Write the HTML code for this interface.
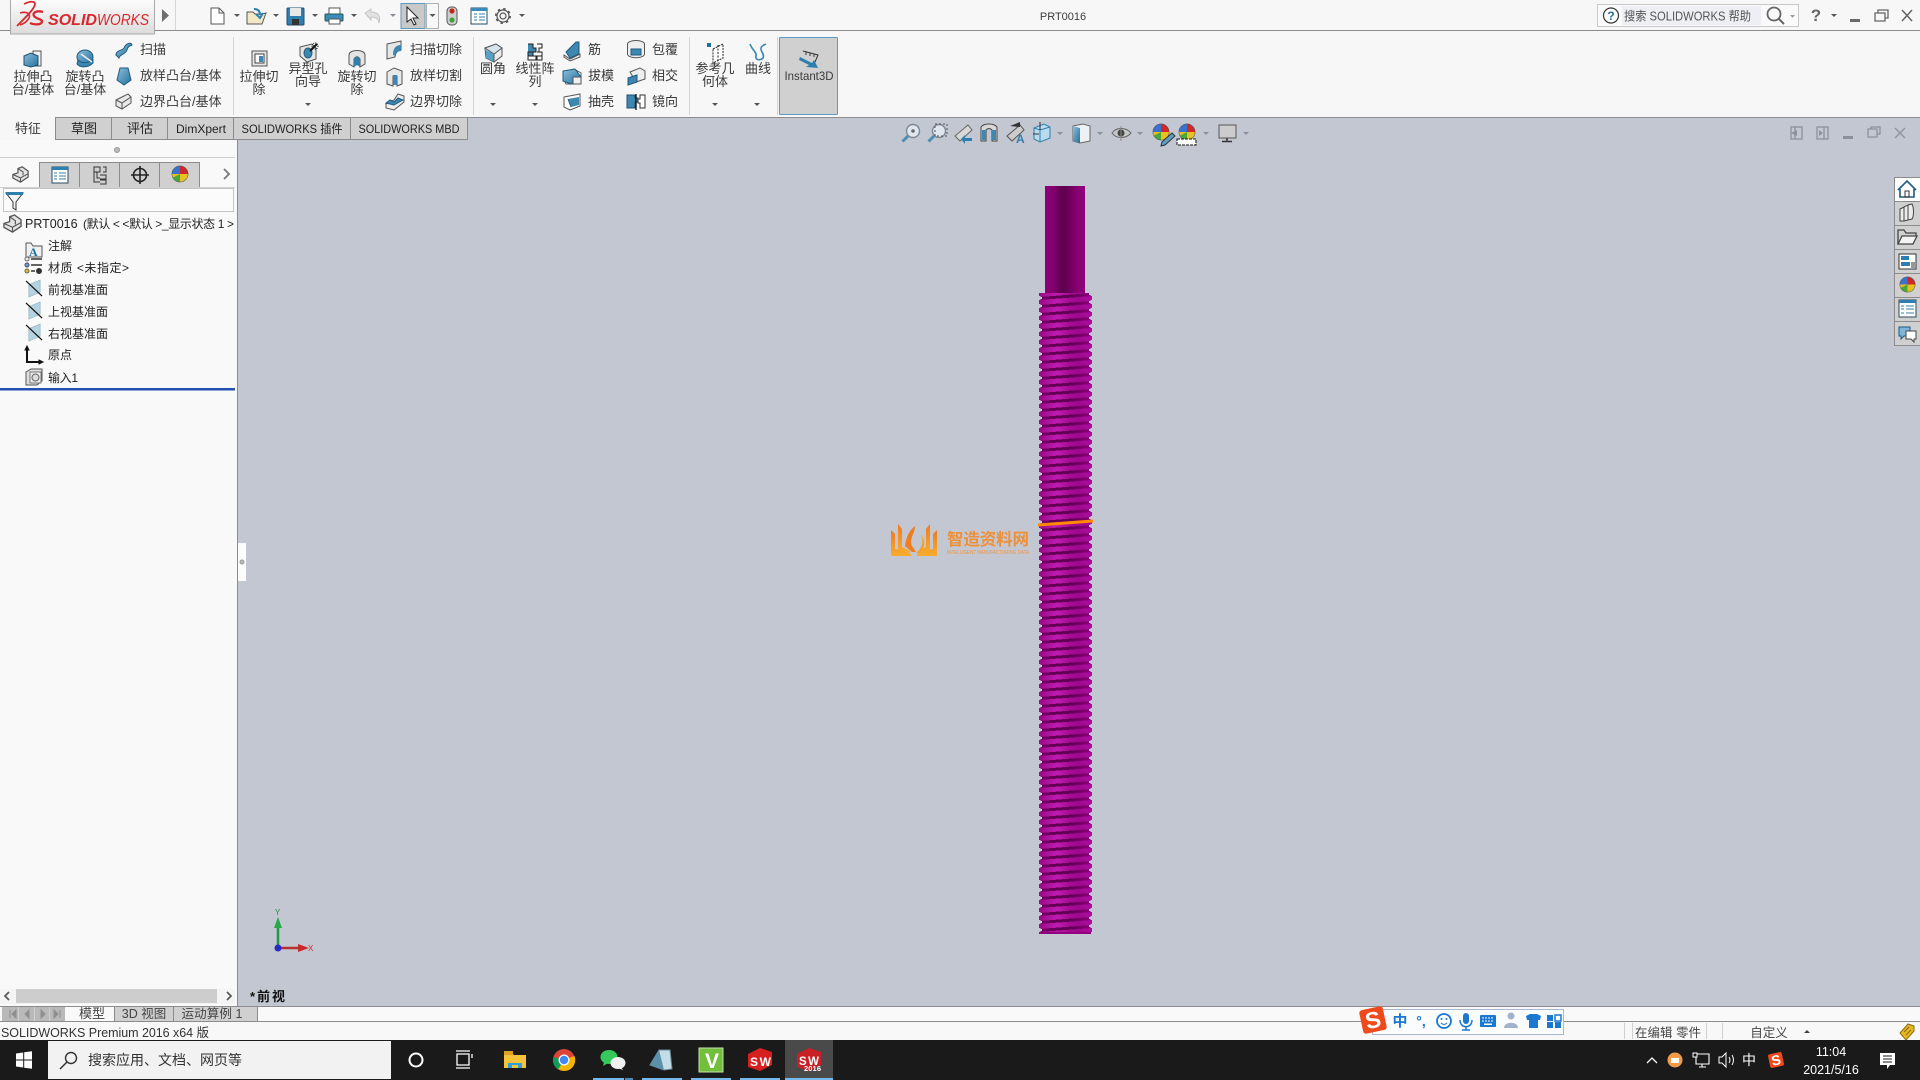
<!DOCTYPE html>
<html><head><meta charset="utf-8"><title>SOLIDWORKS</title>
<style>
html,body{margin:0;padding:0;width:1920px;height:1080px;overflow:hidden;background:#c3c7d2}
svg{display:block}
text{font-family:"Liberation Sans","Noto Sans CJK SC",sans-serif;fill:#3a3a3a;font-size:13px}
.c{text-anchor:middle}
.t12{font-size:12px;fill:#222}
.w{fill:#fff}
</style></head><body>
<svg width="1920" height="1080" viewBox="0 0 1920 1080" xmlns="http://www.w3.org/2000/svg">
<defs>
<linearGradient id="lit" gradientUnits="userSpaceOnUse" x1="0" x2="53" y1="0" y2="0"><stop offset="0" stop-color="#90107e"/><stop offset=".15" stop-color="#ac129c"/><stop offset=".35" stop-color="#c01cb0"/><stop offset=".55" stop-color="#aa0c98"/><stop offset=".75" stop-color="#9e088e"/><stop offset="1" stop-color="#ae0c9e"/></linearGradient>
<linearGradient id="drk" gradientUnits="userSpaceOnUse" x1="0" x2="53" y1="0" y2="0"><stop offset="0" stop-color="#820070"/><stop offset=".25" stop-color="#660058"/><stop offset=".6" stop-color="#600054"/><stop offset=".8" stop-color="#760066"/><stop offset="1" stop-color="#900080"/></linearGradient>
<linearGradient id="shank" x1="0" x2="1" y1="0" y2="0"><stop offset="0" stop-color="#8c0078"/><stop offset=".2" stop-color="#840070"/><stop offset=".38" stop-color="#640052"/><stop offset=".52" stop-color="#620050"/><stop offset=".7" stop-color="#7a0066"/><stop offset=".85" stop-color="#8c0078"/><stop offset="1" stop-color="#8c0078"/></linearGradient>
<pattern id="th" x="1039" y="292" width="53" height="8" patternUnits="userSpaceOnUse">
<g shape-rendering="crispEdges">
<polygon points="0,0 53,-4 53,1 0,5" fill="url(#lit)"/>
<polygon points="0,8 53,4 53,9 0,13" fill="url(#lit)"/>
<polygon points="0,5 53,1 53,4 0,8" fill="url(#drk)"/>
<rect x="0" y="4" width="1.500" height="4" fill="#c3c7d2"/><rect x="1.500" y="5" width="1.500" height="2" fill="#c3c7d2"/>
<rect x="51.500" y="0" width="1.500" height="4" fill="#c3c7d2"/><rect x="50" y="1" width="1.500" height="2" fill="#c3c7d2"/>
</g></pattern>
<linearGradient id="bl" x1="0" x2="1" y1="0" y2="1"><stop offset="0" stop-color="#8cc0dc"/><stop offset="1" stop-color="#256f9c"/></linearGradient>
<linearGradient id="logo" x1="0" x2="0" y1="0" y2="1"><stop offset="0" stop-color="#fdfdfd"/><stop offset="1" stop-color="#dcdcdc"/></linearGradient>
<linearGradient id="org" x1="0" x2="0" y1="0" y2="1"><stop offset="0" stop-color="#ee7a22"/><stop offset="1" stop-color="#f8ac2c"/></linearGradient>
<symbol id="part" viewBox="0 0 20 20" overflow="visible"><path d="M1 10 L7 8 V3 L12 1 L19 6 V13 L10 19 L1 14 Z" fill="#e4e4e4" stroke="#555" stroke-width="1.400"/><path d="M1 10 L10 14 L19 9 M10 14 V19 M7 3 L13 7 V11" fill="none" stroke="#555" stroke-width="1.200"/></symbol>
<symbol id="plane" viewBox="0 0 18 18" overflow="visible"><path d="M3 5 L15 0 V13 L3 18 Z" fill="#b4d2e0" stroke="#8fb2c4" stroke-width=".7"/><path d="M0 1 L17 17" stroke="#111" stroke-width="1.300"/></symbol>
<symbol id="ball" viewBox="0 0 20 20" overflow="visible"><circle cx="10" cy="10" r="9" fill="#e8c020"/><path d="M10 10 L1 10 A9 9 0 0 1 10 1 Z" fill="#3a72d0"/><path d="M10 10 V1 A9 9 0 0 1 19 10 Z" fill="#d02828"/><path d="M10 10 L2 14 A9 9 0 0 0 10 19 Z" fill="#48a838"/><circle cx="10" cy="10" r="9" fill="none" stroke="#555" stroke-width=".6"/></symbol>
<symbol id="drop" viewBox="0 0 6 4" overflow="visible"><path d="M0 0 H6 L3 3 Z" fill="#555"/></symbol>
<symbol id="dropg" viewBox="0 0 6 4" overflow="visible"><path d="M0 0 H6 L3 3 Z" fill="#8b8f99"/></symbol>
<symbol id="mag" viewBox="0 0 20 20" overflow="visible"><circle cx="12" cy="8" r="6.500" fill="#dfe6ee" stroke="#7d8894" stroke-width="1.400"/><path d="M7 13 L1.500 18.500" stroke="#4c8db4" stroke-width="3"/></symbol>
</defs>

<!-- canvas -->
<rect width="1920" height="1080" fill="#c3c7d2"/>

<!-- top bars -->
<rect x="0" y="0" width="1920" height="30" fill="#f7f7f7"/>
<rect x="0" y="30" width="1920" height="1" fill="#8c8c8c"/>
<rect x="0" y="31" width="1920" height="86" fill="#f7f7f7"/>
<rect x="0" y="117" width="1920" height="1" fill="#8c8c8c"/>
<rect x="0" y="118" width="238" height="888" fill="#f9f9f9"/>
<rect x="237" y="118" width="1" height="888" fill="#8c8c8c"/>

<!-- logo -->
<rect x="10.500" y="-1" width="144" height="35" fill="url(#logo)" stroke="#a8a8a8"/>
<g fill="none" stroke="#d8282e" stroke-width="2">
<path d="M24 4 C30 1 35 1 35 4 C35 8 27 16 17 26" stroke-width="1.800"/>
<path d="M20 13 C27 11 31 14 29 18 C27 22 23 24 20 25" stroke-width="1.600"/>
<path d="M43 12 C36 10 32 13 34 16 C36 19 43 19 42 22 C41 25 34 25 30 23" stroke-width="2.300"/>
</g>
<text x="48" y="25" style="font-size:15.500px;font-weight:bold;font-style:italic;fill:#d8282e" textLength="49" lengthAdjust="spacingAndGlyphs">SOLID</text>
<text x="97" y="25" style="font-size:15.500px;font-style:italic;fill:#d8282e" textLength="52" lengthAdjust="spacingAndGlyphs">WORKS</text>
<path d="M162 9 L169 15.500 L162 22 Z" fill="#6e6e6e"/>
<rect x="175" y="0" width="1" height="30" fill="#d6d6d6"/>

<!-- QAT -->
<path d="M211 8 H219 L224 13 V24 H211 Z" fill="#fff" stroke="#555"/><path d="M219 8 V13 H224" fill="none" stroke="#555"/>
<use href="#drop" x="234" y="14" width="6" height="4"/>
<path d="M247 24 V12 H253 L255 14 H262 L266 13 L262 24 Z" fill="#f3e8c6" stroke="#555"/><path d="M254 9 C258 9 260 11 260 15 M263 13 L260 18 L256 14" fill="none" stroke="#2f7fae" stroke-width="2"/>
<use href="#drop" x="273" y="14" width="6" height="4"/>
<rect x="287" y="8" width="17" height="17" rx="1" fill="#2f7fae" stroke="#1f4f70"/><rect x="290" y="8" width="11" height="8" fill="#e8e8e8"/><rect x="292" y="19" width="7" height="6" fill="#333"/>
<use href="#drop" x="312" y="14" width="6" height="4"/>
<rect x="329" y="8" width="11" height="6" fill="#fff" stroke="#555"/><rect x="325" y="14" width="18" height="7" rx="1" fill="#3a8dbb" stroke="#255"/><rect x="329" y="19" width="11" height="5" fill="#fff" stroke="#555"/>
<use href="#drop" x="351" y="14" width="6" height="4"/>
<path d="M365 13 L371 9 V12 C378 12 381 16 379 23 C378 18 375 17 371 17 V20 Z" fill="#e2e2e2" stroke="#c4c4c4"/>
<use href="#dropg" x="390" y="14" width="6" height="4"/>
<rect x="401" y="3.500" width="24" height="25" fill="#c9c9c9" stroke="#5b9ac0"/>
<path d="M407 7 V22 L411 19 L414 25 L416 24 L413 18 L418 18 Z" fill="#fff" stroke="#222"/>
<rect x="426.500" y="3.500" width="12" height="25" fill="#f7f7f7" stroke="#b0b0b0"/><use href="#drop" x="429.500" y="14" width="6" height="4"/>
<rect x="447" y="7" width="10" height="18" rx="4" fill="#cfcfcf" stroke="#555"/><circle cx="452" cy="11" r="2.600" fill="#c4271e"/><circle cx="452" cy="20" r="2.600" fill="#3aa43a"/>
<rect x="471" y="8" width="16" height="16" fill="#fff" stroke="#2a4a60"/><rect x="471" y="8" width="16" height="3" fill="#3a8dbb"/><path d="M474 14 H477 M479 14 H485 M474 17 H477 M479 17 H485 M474 20 H477 M479 20 H485" stroke="#2f7fae"/>
<circle cx="503" cy="16" r="3" fill="none" stroke="#555" stroke-width="1.200"/><circle cx="503" cy="16" r="6" fill="none" stroke="#555" stroke-width="1.200"/><circle cx="503" cy="16" r="7.200" fill="none" stroke="#555" stroke-width="1.600" stroke-dasharray="2.500 3.150"/>
<use href="#drop" x="519" y="14" width="6" height="4"/>
<text class="c" x="1063" y="20" style="font-size:11px">PRT0016</text>

<!-- help -->
<rect x="1597.500" y="4.500" width="201" height="22" fill="#fafafa" stroke="#c8c8c8"/>
<rect x="1622" y="6" width="139" height="19" fill="#edeff4"/>
<circle cx="1611" cy="15.500" r="7.500" fill="#fff" stroke="#333" stroke-width="1.200"/>
<text class="c" x="1611" y="20" style="font-size:12px;font-weight:bold;fill:#1f6f9c">?</text>
<text x="1624" y="20.500" style="font-size:12.500px;fill:#555" textLength="127" lengthAdjust="spacingAndGlyphs">搜索 SOLIDWORKS 帮助</text>
<circle cx="1774" cy="14" r="6.500" fill="none" stroke="#666" stroke-width="1.800"/><path d="M1779 19 L1784 24" stroke="#666" stroke-width="2"/>
<use href="#dropg" x="1790" y="15" width="5" height="3.500"/>
<text class="c" x="1816" y="21" style="font-size:17px;font-weight:bold;fill:#666">?</text>
<use href="#drop" x="1831" y="14" width="6" height="4"/>
<rect x="1850" y="19" width="10" height="3" fill="#6a6a6a"/>
<path d="M1875 13 H1885 V21 H1875 Z M1878 13 V10 H1888 V18 H1885" fill="none" stroke="#666" stroke-width="1.300"/>
<path d="M1902 10 L1912 21 M1912 10 L1902 21" stroke="#666" stroke-width="1.500"/>

<!-- Ribbon icons -->
<g>
<rect x="33" y="51" width="8" height="15" fill="#f0f0f0" stroke="#555"/><path d="M24 56 L31 53 L38 56 V65 L31 67 L24 65 Z" fill="url(#bl)" stroke="#1f4f70"/>
<ellipse cx="85" cy="57" rx="8" ry="7" fill="url(#bl)" stroke="#1f5a80"/><path d="M78 60 C82 64 88 63 93 60 V63 C88 68 80 68 77 64 Z" fill="#3d87b0" stroke="#1f5a80"/><path d="M81 54 L92 62" stroke="#eee" stroke-width="1.500"/>
<path d="M116 55 C116 50 122 51 124 48 C126 43 131 42 132 45 C130 46 128 46 127 50 C125 55 120 54 119 58 Z" fill="url(#bl)" stroke="#1f5a80"/>
<path d="M120 68 H128 L131 80 L124 85 L117 80 Z" fill="url(#bl)" stroke="#1f5a80"/>
<path d="M116 100 L124 96 L128 94 L131 97 V103 L122 109 L116 106 Z" fill="#e8e8e8" stroke="#555"/><path d="M116 100 L122 103 L131 97 M122 103 V109" fill="none" stroke="#555"/>
<path d="M252 51 H267 V66 H252 Z" fill="#e6e6e6" stroke="#555"/><rect x="255" y="54" width="9" height="9" fill="#fff" stroke="#444"/><rect x="259" y="56" width="4" height="6" fill="#3d87b0"/>
<path d="M300 47 L312 44 L316 48 V59 L307 62 L300 56 Z" fill="#e6e6e6" stroke="#555"/><ellipse cx="308" cy="53" rx="4" ry="5" fill="#3d87b0" stroke="#1f5a80"/><path d="M310 51 L317 44" stroke="#111" stroke-width="2"/><circle cx="315" cy="46" r="3" fill="none" stroke="#111" stroke-dasharray="1 1"/>
<path d="M349 55 C349 49 365 49 365 55 V64 L360 67 V59 C358 56 356 56 354 59 V67 L349 64 Z" fill="#e4e4e4" stroke="#555"/><path d="M354 59 V67 L357 65 L360 67 V59 C358 56 356 56 354 59" fill="#2f7fae"/>
<path d="M387 44 L401 41 V50 C397 50 395 53 395 57 L387 59 Z" fill="#e6e6e6" stroke="#555"/><path d="M393 55 C393 48 396 45 401 45 V51 C398 51 396 53 396 56 Z" fill="#3d87b0"/>
<path d="M387 72 L394 68 L402 71 V84 L397 86 V76 H393 V86 L387 84 Z" fill="#e8e8e8" stroke="#555"/><rect x="393" y="75" width="4" height="10" fill="#3d87b0"/>
<path d="M386 104 L394 100 L398 94 L404 96 V102 L394 110 L386 108 Z" fill="#eee" stroke="#555"/><path d="M386 103 L390 100 L394 102 L398 98 L403 100 L394 105 Z" fill="#3d87b0" stroke="#1f5a80"/>
<path d="M485 48 L496 44 L502 48 V56 L494 62 L486 58 Z" fill="#ececec" stroke="#555"/><path d="M485 48 L496 44 L502 48 L494 54 Z" fill="#d8e4ec" stroke="#555"/><path d="M486 50 L494 54 V62 L486 58 Z" fill="#5a9fc5"/><path d="M494 54 V62" stroke="#555"/>
<g fill="none" stroke="#222" stroke-width="1"><path d="M528 44 H533 V48 H536 V52 H533 V56 H528" fill="#3d87b0"/><path d="M537 44 H542 V48 H539 V52 H542 V56 H537"/><path d="M528 52 H533 V56 H536 V60 H528 Z"/><path d="M537 52 H542 V60 H537 V56 H539"/></g>
<path d="M566 52 L576 42 H579 V54 L570 58 Z" fill="#3d87b0" stroke="#1f5a80"/><path d="M564 55 L570 59 L580 54 V57 L570 61 L564 57 Z" fill="#eee" stroke="#555"/>
<path d="M564 72 L574 69 L581 73 V84 L572 84 H566 L564 80 Z" fill="#fff" stroke="#555"/><path d="M563 71 L575 69 L581 77 L571 84 L563 81 Z" fill="url(#bl)" stroke="#1f5a80"/><rect x="573" y="77" width="8" height="7" fill="#f0f0f0" stroke="#555"/>
<path d="M564 97 L580 94 V106 L570 110 L564 107 Z" fill="#fff" stroke="#555"/><path d="M568 99 L579 97 V105 L571 107 Z" fill="#3d87b0"/><path d="M568 99 L571 107" stroke="#1f5a80"/>
<ellipse cx="636" cy="44" rx="8.500" ry="3.500" fill="#eee" stroke="#555"/><path d="M627.500 44 V54 C628 59 644 59 644.500 54 V44" fill="#eee" stroke="#555"/><path d="M631 49 H641 V55 H631 Z" fill="#3d87b0" stroke="#1f5a80"/>
<path d="M630 72 L640 68 L645 71 V79 L636 82 Z" fill="#eee" stroke="#555"/><path d="M628 78 L637 75 V82 L628 85 Z" fill="#3d87b0" stroke="#1f5a80"/>
<path d="M627 95 H635 V98 H638 V102 H635 V108 H627 Z" fill="#3d87b0" stroke="#1f4f70"/><path d="M636 94 V110" stroke="#111" stroke-width="1.300"/><path d="M645 95 H640 V99 H638 V103 H640 V108 H645 Z" fill="#fff" stroke="#333"/>
<rect x="707" y="43" width="4" height="4" fill="#1f6f9c"/><path d="M713 49 L723 44 V58 L713 63 Z" fill="#fff" stroke="#222" stroke-dasharray="2 1"/><path d="M718 45 V63" stroke="#222" stroke-dasharray="2 1.500"/>
<path d="M750 44 C752 50 757 52 756 56 C755 60 760 61 763 58 C765 54 760 51 761 48 C762 45 764 45 766 44" fill="none" stroke="#3d87b0" stroke-width="1.600"/>
</g>
<!-- Ribbon text -->
<g style="font-size:13px">
<text class="c" x="33" y="81">拉伸凸</text><text class="c" x="33" y="94">台/基体</text>
<text class="c" x="85" y="81">旋转凸</text><text class="c" x="85" y="94">台/基体</text>
<text x="140" y="54">扫描</text><text x="140" y="80">放样凸台/基体</text><text x="140" y="106">边界凸台/基体</text>
<text class="c" x="259" y="81">拉伸切</text><text class="c" x="259" y="94">除</text>
<text class="c" x="308" y="73">异型孔</text><text class="c" x="308" y="86">向导</text>
<text class="c" x="357" y="81">旋转切</text><text class="c" x="357" y="94">除</text>
<text x="410" y="54">扫描切除</text><text x="410" y="80">放样切割</text><text x="410" y="106">边界切除</text>
<text class="c" x="493" y="73">圆角</text>
<text class="c" x="535" y="73">线性阵</text><text class="c" x="535" y="86">列</text>
<text x="588" y="54">筋</text><text x="588" y="80">拔模</text><text x="588" y="106">抽壳</text>
<text x="652" y="54">包覆</text><text x="652" y="80">相交</text><text x="652" y="106">镜向</text>
<text class="c" x="715" y="73">参考几</text><text class="c" x="715" y="86">何体</text>
<text class="c" x="758" y="73">曲线</text>
</g>
<use href="#drop" x="305" y="103" width="6" height="4"/><use href="#drop" x="490" y="103" width="6" height="4"/><use href="#drop" x="532" y="103" width="6" height="4"/><use href="#drop" x="712" y="103" width="6" height="4"/><use href="#drop" x="754" y="103" width="6" height="4"/>
<rect x="233" y="37" width="1" height="78" fill="#d4d4d4"/><rect x="473" y="37" width="1" height="78" fill="#d4d4d4"/><rect x="689" y="37" width="1" height="78" fill="#d4d4d4"/><rect x="777" y="37" width="1" height="78" fill="#d4d4d4"/>
<rect x="779.500" y="37.500" width="58" height="77" rx="1" fill="#d0d0d0" stroke="#5b9ac0"/>
<path d="M803 51 L818 55 L815 62 M806 52 V55 M810 53 V56 M814 54 V57" fill="none" stroke="#333"/><path d="M800 57 L812 63 L814 60 L818 68 L806 67 L809 65 L799 60 Z" fill="#2f7fae"/>
<text class="c" x="809" y="80" style="font-size:12px" textLength="49" lengthAdjust="spacingAndGlyphs">Instant3D</text>

<!-- tabs -->
<g fill="#d0d0d0" stroke="#8c8c8c"><rect x="55.500" y="117.500" width="56" height="22"/><rect x="111.500" y="117.500" width="56" height="22"/><rect x="167.500" y="117.500" width="66" height="22"/><rect x="233.500" y="117.500" width="117" height="22"/><rect x="350.500" y="117.500" width="117" height="22"/></g>
<rect x="0" y="139" width="238" height="1" fill="#8c8c8c"/>
<rect x="0" y="117" width="55" height="23" fill="#f7f7f7"/>
<text class="c" x="28" y="133">特征</text><text class="c" x="84" y="133" style="fill:#222">草图</text><text class="c" x="140" y="133" style="fill:#222">评估</text>
<text class="c" x="201" y="133" style="font-size:12px;fill:#222" textLength="50" lengthAdjust="spacingAndGlyphs">DimXpert</text>
<text class="c" x="292" y="133" style="font-size:12px;fill:#222" textLength="101" lengthAdjust="spacingAndGlyphs">SOLIDWORKS 插件</text>
<text class="c" x="409" y="133" style="font-size:12px;fill:#222" textLength="101" lengthAdjust="spacingAndGlyphs">SOLIDWORKS MBD</text>

<!-- left panel -->
<rect x="0" y="140" width="237" height="17" fill="#f9f9f9"/>
<circle cx="117" cy="150" r="2.500" fill="#b8b8b8" stroke="#999"/>
<rect x="0" y="157" width="235" height="1" fill="#cfcfcf"/>
<g fill="#d0d0d0" stroke="#8c8c8c"><rect x="39.500" y="162.500" width="40" height="25"/><rect x="79.500" y="162.500" width="40" height="25"/><rect x="119.500" y="162.500" width="40" height="25"/><rect x="159.500" y="162.500" width="40" height="25"/></g>
<rect x="0" y="162" width="39" height="26" fill="#f9f9f9"/>
<rect x="0" y="187" width="235" height="1" fill="#cfcfcf"/>
<use href="#part" x="12" y="166" width="17" height="17"/>
<rect x="52" y="167" width="16" height="16" fill="#fff" stroke="#2a4a60"/><rect x="52" y="167" width="16" height="3" fill="#2f7fae"/><path d="M54 173 H57 M59 173 H66 M54 176 H57 M59 176 H66 M54 179 H57 M59 179 H66" stroke="#2f7fae"/>
<path d="M94 167 H100 V172 H94 Z M94 172 V182 H100 M97 172 V178 H100 M100 175 H106 V179 H100 M100 180 H106 V184 H100 M103 167 H106 V172 H103" fill="none" stroke="#333"/>
<circle cx="140" cy="175" r="6.500" fill="none" stroke="#222" stroke-width="1.600"/><path d="M140 166 V184 M131 175 H149" stroke="#222" stroke-width="1.600"/>
<use href="#ball" x="171" y="165" width="18" height="18"/>
<path d="M224 169 L229 174 L224 179" fill="none" stroke="#777" stroke-width="1.800"/>
<rect x="3.500" y="188.500" width="230" height="23" fill="#fbfbfb" stroke="#c4c4c4"/>
<path d="M6 193 H23 L16 202 V210 L13 208 V202 Z" fill="#f4f4f4" stroke="#333"/><rect x="6" y="192" width="17" height="3" fill="#2f7fae"/>
<use href="#part" x="3" y="214" width="19" height="19"/>
<text x="25" y="228" style="font-size:12.500px;fill:#222">PRT0016</text>
<text x="83" y="228" class="t12" textLength="151">(默认 &lt; &lt;默认 &gt;_显示状态 1 &gt;</text>
<path d="M26 243 V257 H42 V246 H33 L31 243 Z" fill="#eef0f2" stroke="#555"/><text x="29" y="256" style="font-family:'Liberation Serif',serif;font-weight:bold;font-size:12px;fill:#1f6f9c">A</text>
<text x="48" y="250" class="t12">注解</text>
<circle cx="27" cy="259" r="2" fill="#eee" stroke="#666"/><circle cx="27" cy="265" r="2" fill="#6aa6cc" stroke="#446"/><circle cx="27" cy="271" r="2" fill="#e4b828" stroke="#665"/><path d="M31 259 H42 M31 265 H42 M31 271 H35" stroke="#333" stroke-width="1.400"/><circle cx="39" cy="271" r="3" fill="#333"/>
<text x="48" y="272" class="t12" textLength="81">材质  &lt;未指定&gt;</text>
<use href="#plane" x="26" y="280" width="17" height="17"/><text x="48" y="294" class="t12">前视基准面</text>
<use href="#plane" x="26" y="302" width="17" height="17"/><text x="48" y="316" class="t12">上视基准面</text>
<use href="#plane" x="26" y="324" width="17" height="17"/><text x="48" y="338" class="t12">右视基准面</text>
<path d="M27 347 V362 H41" fill="none" stroke="#111" stroke-width="2"/><path d="M27 346 L25 350 H29 Z M43 362 L39 360 V364 Z" fill="#111" stroke="#111"/>
<text x="48" y="359" class="t12">原点</text>
<path d="M26 372 L31 369 H42 V381 L37 385 H26 Z" fill="#dfdfdf" stroke="#555"/><rect x="30" y="372" width="11" height="11" fill="#eee" stroke="#777"/><circle cx="35.500" cy="377.500" r="3.500" fill="#ddd" stroke="#666"/>
<text x="48" y="382" class="t12" textLength="30">输入1</text>
<rect x="0" y="388" width="235" height="2.500" fill="#2450b0"/>

<!-- left scrollbar -->
<rect x="0" y="989" width="235" height="15" fill="#f4f4f4"/>
<rect x="16" y="989" width="201" height="14" fill="#cdcdcd"/>
<path d="M9 992 L5 996 L9 1000 M227 992 L231 996 L227 1000" fill="none" stroke="#555" stroke-width="1.700"/>

<!-- collapse tab -->
<rect x="238" y="543" width="8" height="38" fill="#fcfcfc"/><circle cx="242" cy="562" r="2" fill="#bbb" stroke="#999"/>

<!-- heads-up -->
<g>
<use href="#mag" x="901" y="123" width="20" height="20"/><circle cx="913" cy="131" r="1.800" fill="#666"/>
<use href="#mag" x="927" y="123" width="20" height="20"/><rect x="935" y="124" width="12" height="12" fill="none" stroke="#555" stroke-dasharray="2 2"/>
<path d="M955 136 L968 125 L972 130 L960 141 Z" fill="#d8d8d8" stroke="#666"/><path d="M961 139 L965 135 V138 H972 V141 H965 V144 Z" fill="#2f7fae"/>
<path d="M981 127 C984 123 994 123 997 127 V141 H992 V130 C990 128 988 128 986 130 V141 H981 Z" fill="#d8d8d8" stroke="#444"/><rect x="982" y="130" width="4" height="10" fill="#3d87b0"/><rect x="992" y="130" width="4" height="10" fill="#3d87b0"/>
<path d="M1007 136 L1020 125 L1024 130 L1012 141 Z" fill="#ccc" stroke="#555"/><path d="M1010 126 L1020 122 V127 Z" fill="#333"/><text x="1016" y="143" style="font-size:12px;fill:#2f7fae;font-weight:bold">A</text>
<path d="M1034 128 L1044 124 L1050 127 V138 L1040 142 L1034 139 Z" fill="#b9dcee" stroke="#2f7fae"/><path d="M1040 130 V142 M1034 128 L1040 130 L1050 127" stroke="#2f7fae" fill="none"/><path d="M1040 122 V130 M1033 134 H1039" stroke="#333"/>
<use href="#dropg" x="1057" y="132" width="6" height="4"/>
<path d="M1073 126 L1083 124 L1090 126 V141 L1080 143 L1073 141 Z" fill="#eef1f4" stroke="#666"/><path d="M1073 126 L1080 128 V143 L1073 141 Z" fill="url(#bl)"/>
<use href="#dropg" x="1097" y="132" width="6" height="4"/>
<path d="M1112 133 C1116 127 1126 127 1131 133 C1126 139 1116 139 1112 133 Z" fill="#c6c6c6" stroke="#666"/><circle cx="1121" cy="133" r="3.500" fill="#444"/><path d="M1121 126 V141" stroke="#888"/>
<use href="#dropg" x="1137" y="132" width="6" height="4"/>
<use href="#ball" x="1152" y="123" width="18" height="18"/><path d="M1162 142 L1172 133 L1175 136 L1165 145 L1161 146 Z" fill="#5a9fc5" stroke="#333"/>
<use href="#ball" x="1178" y="123" width="18" height="18"/><rect x="1177" y="139" width="19" height="6" fill="#fff" stroke="#111" stroke-dasharray="3 1"/>
<use href="#dropg" x="1203" y="132" width="6" height="4"/>
<rect x="1219" y="125" width="17" height="13" fill="#ccc" stroke="#555"/><path d="M1227 138 V141 M1222 141.500 H1232" stroke="#333" stroke-width="1.500"/>
<use href="#dropg" x="1243" y="132" width="6" height="4"/>
</g>

<!-- window ctrl in canvas -->
<g fill="none" stroke="#8e9199" stroke-width="1.300">
<rect x="1791" y="127" width="11" height="12"/><path d="M1795 127 V139"/><path d="M1800 130 L1794 133 L1800 136" fill="#8e9199" stroke="none" transform="translate(-3 0)"/>
<rect x="1817" y="127" width="11" height="12"/><path d="M1824 127 V139"/><path d="M1819 130 L1823 133 L1819 136 Z" fill="#8e9199" stroke="none"/>
<path d="M1868 129 H1877 V137 H1868 Z M1871 129 V127 H1880 V134 H1877"/>
<path d="M1895 128 L1905 138 M1905 128 L1895 138"/>
</g>
<rect x="1843" y="136" width="10" height="3" fill="#8e9199"/>

<!-- task pane -->
<g fill="#d0d0d0" stroke="#8c8c8c"><rect x="1894.500" y="177.500" width="26" height="24" fill="#fff"/><rect x="1894.500" y="201.500" width="26" height="24"/><rect x="1894.500" y="225.500" width="26" height="24"/><rect x="1894.500" y="249.500" width="26" height="24"/><rect x="1894.500" y="273.500" width="26" height="24"/><rect x="1894.500" y="297.500" width="26" height="24"/><rect x="1894.500" y="321.500" width="26" height="24"/></g>
<path d="M1898 190 L1907 181 L1916 190 M1900 189 V197 H1914 V189" fill="#fff" stroke="#1f5a80" stroke-width="1.600"/><rect x="1905" y="191" width="4" height="6" fill="none" stroke="#333"/>
<path d="M1900 209 L1904 207 V221 H1900 Z M1904 207 L1908 205 V220 L1904 221 Z M1908 205 L1912 204 C1914 208 1914 216 1912 219 L1908 220 Z" fill="#ececec" stroke="#444"/>
<path d="M1898 244 V230 H1904 L1906 233 H1916 V236" fill="none" stroke="#444" stroke-width="1.300"/><path d="M1898 244 L1902 236 H1917 L1913 244 Z" fill="#f4f4f4" stroke="#444" stroke-width="1.300"/>
<rect x="1899" y="254" width="17" height="15" fill="#fff" stroke="#333"/><rect x="1901" y="256" width="8" height="4" fill="#2f7fae"/><rect x="1901" y="262" width="9" height="4" fill="#2f7fae"/><rect x="1911" y="262" width="4" height="6" fill="#999"/>
<use href="#ball" x="1899" y="276" width="17" height="17"/>
<rect x="1899" y="300" width="17" height="17" fill="#fff" stroke="#2a4a60"/><rect x="1899" y="300" width="17" height="3" fill="#2f7fae"/><path d="M1901 306 H1904 M1906 306 H1914 M1901 309 H1904 M1906 309 H1914 M1901 313 H1904 M1906 313 H1914" stroke="#2f7fae"/>
<path d="M1899 327 H1910 V336 H1904 L1901 339 V336 H1899 Z" fill="#7db6d8" stroke="#1f5a80"/><path d="M1906 331 H1916 V339 H1914 V342 L1911 339 H1906 Z" fill="#fff" stroke="#444"/>

<!-- model -->
<rect x="1045" y="186" width="40" height="108" fill="url(#shank)"/>
<rect x="1039" y="293" width="53" height="641" fill="url(#th)"/>
<rect x="1041" y="932" width="50" height="2" fill="#90007e"/>
<path d="M1038 525 L1093 521" stroke="#ff8a00" stroke-width="3"/>

<!-- watermark -->
<g>
<path d="M891 556 V530 L895 534 V549 C900 550 905 551 911 554 V556 Z" fill="url(#org)"/>
<path d="M937 556 V530 L933 534 V549 C928 550 923 551 917 554 V556 Z" fill="url(#org)"/>
<path d="M898 550 V524 L902 529 V547 L910 551 V553 Z" fill="url(#org)"/>
<path d="M930 550 V524 L926 529 V547 L918 551 V553 Z" fill="url(#org)"/>
<path d="M905 546 C906 536 910 530 915 526 C915 534 909 538 912 546 L916 552 H912 Z" fill="#ee7e20"/>
<path d="M916 553 C922 548 924 542 921 535 C926 540 925 548 920 553 Z" fill="#f4a02a"/>
</g>
<text x="947" y="545" style="font-size:16.500px;font-weight:bold;fill:#ef8f36" textLength="82">智造资料网</text>
<text x="947" y="554" style="font-size:5px;fill:#ee9440" textLength="82" lengthAdjust="spacingAndGlyphs">INTELLIGENT MANUFACTURING DATA</text>

<!-- triad -->
<path d="M278 949 V926" stroke="#1f9a3e" stroke-width="2.500"/><path d="M278 917 L274 928 H282 Z" fill="#28a848"/>
<path d="M279 948 H300" stroke="#b83030" stroke-width="2.500"/><path d="M309 948 L298 944 V952 Z" fill="#c82a2a"/>
<circle cx="278" cy="948" r="3.500" fill="#2a2ac8"/>
<text x="275" y="915" style="font-size:8px;fill:#2e8a4e">Y</text><text x="308" y="951" style="font-size:8px;fill:#b83030">X</text>

<text x="250" y="1001" style="font-size:13px;font-weight:bold;fill:#111;letter-spacing:2px">*前视</text>

<!-- bottom tabs -->
<rect x="0" y="1006" width="1920" height="1" fill="#8c8c8c"/>
<rect x="0" y="1007" width="1920" height="14" fill="#f9f9f9"/>
<rect x="0" y="1021" width="1920" height="1" fill="#8c8c8c"/>
<rect x="0" y="1022" width="1920" height="18" fill="#f8f8f8"/>
<rect x="2" y="1007" width="63" height="14" fill="#b9b9b9"/>
<path d="M10 1010 V1018 M16 1010 L12 1014 L16 1018 Z M29 1010 L25 1014 L29 1018 Z M41 1010 L45 1014 L41 1018 Z M54 1010 L58 1014 L54 1018 Z M60 1010 V1018" fill="#8f8f8f" stroke="#8f8f8f"/>
<path d="M18.500 1007 V1021 M34.500 1007 V1021 M49.500 1007 V1021" stroke="#d0d0d0"/>
<g fill="#d0d0d0" stroke="#8c8c8c"><rect x="114.500" y="1006.500" width="59" height="15"/><rect x="173.500" y="1006.500" width="84" height="15"/></g>
<text class="c" x="92" y="1018" style="font-size:13px;fill:#444">模型</text>
<text class="c" x="144" y="1018" style="font-size:12.500px;fill:#444">3D 视图</text>
<text class="c" x="212" y="1018" style="font-size:12.500px;fill:#444" textLength="61">运动算例 1</text>
<text x="1" y="1037" style="font-size:12.500px;fill:#333" textLength="208">SOLIDWORKS Premium 2016 x64 版</text>

<!-- status right -->
<path d="M1624.500 1023 V1039 M1632.500 1023 V1039 M1706.500 1023 V1039 M1722.500 1023 V1039" stroke="#d0d0d0"/>
<text class="c" x="1668" y="1037" style="font-size:12.500px;fill:#444">在编辑 零件</text>
<text class="c" x="1769" y="1037" style="font-size:12.500px;fill:#444">自定义</text>
<path d="M1804 1033 H1810 L1807 1030 Z" fill="#444"/>
<path d="M1900 1033 L1908 1024 L1914 1026 V1031 L1906 1040 Z" fill="#e6b820" stroke="#8a6a10"/><path d="M1904 1032 L1909 1027 M1906 1035 L1911 1030" stroke="#8a6a10"/>

<!-- IME -->
<rect x="1372.500" y="1009.500" width="191" height="25" fill="#fbfcfe" stroke="#a8b8d0"/>
<g transform="rotate(-12 1373 1020)"><rect x="1361" y="1008" width="24" height="24" rx="3" fill="#ee4a1c"/><text class="c" x="1373" y="1028" style="font-size:23px;font-weight:bold;fill:#fff">S</text></g>
<text class="c" x="1400" y="1026" style="font-size:15px;font-weight:bold;fill:#1a78d0">中</text>
<text class="c" x="1421" y="1026" style="font-size:14px;font-weight:bold;fill:#1a78d0">°,</text>
<circle cx="1444" cy="1021" r="7" fill="none" stroke="#1a78d0" stroke-width="1.800"/><circle cx="1441.500" cy="1019" r="1" fill="#1a78d0"/><circle cx="1446.500" cy="1019" r="1" fill="#1a78d0"/><path d="M1441 1023 Q1444 1026 1447 1023" fill="none" stroke="#1a78d0"/>
<rect x="1463" y="1013" width="6" height="11" rx="3" fill="#1a78d0"/><path d="M1460 1020 C1460 1029 1472 1029 1472 1020 M1466 1027 V1030 M1462 1030 H1470" fill="none" stroke="#1a78d0" stroke-width="1.500"/>
<rect x="1480" y="1015" width="16" height="12" rx="1" fill="#1a78d0"/><path d="M1482 1018 H1494 M1482 1021 H1494" stroke="#fff" stroke-dasharray="2 1"/><rect x="1484" y="1023.500" width="8" height="1.500" fill="#fff"/>
<circle cx="1511" cy="1016" r="3.500" fill="#9fb4cc"/><path d="M1504 1028 C1504 1021 1518 1021 1518 1028 Z" fill="#9fb4cc"/>
<path d="M1526 1016 L1530 1014 H1537 L1541 1016 L1540 1020 H1538 V1028 H1529 V1020 H1527 Z" fill="#1a78d0"/>
<rect x="1547" y="1015" width="6" height="6" fill="#1a78d0"/><rect x="1555" y="1015" width="6" height="6" fill="none" stroke="#1a78d0" stroke-width="1.500"/><rect x="1547" y="1022" width="6" height="6" fill="#1a78d0"/><rect x="1555" y="1022" width="6" height="6" fill="#1a78d0"/>

<!-- taskbar -->
<rect x="0" y="1040" width="1920" height="40" fill="#1a1a1a"/>
<rect x="48" y="1041" width="343" height="38" fill="#f2f2f2"/>
<g fill="#fff"><path d="M16 1053.500 L23.200 1052.500 V1059.500 H16 Z M24.200 1052.300 L32 1051.300 V1059.500 H24.200 Z M16 1060.500 H23.200 V1067.500 L16 1066.500 Z M24.200 1060.500 H32 V1068.700 L24.200 1067.700 Z"/></g>
<circle cx="71" cy="1058" r="5.500" fill="none" stroke="#333" stroke-width="1.400"/><path d="M67 1062 L60 1069" stroke="#333" stroke-width="1.500"/>
<text x="88" y="1065" style="font-size:14px;fill:#333">搜索应用、文档、网页等</text>
<circle cx="416" cy="1060" r="6.500" fill="none" stroke="#fff" stroke-width="2"/>
<path d="M457 1054 H469 V1065 H457 Z M456 1051 H470 M456 1068 H470 M472 1054 V1058" fill="none" stroke="#fff" stroke-width="1.300"/>
<path d="M504 1053 V1068 H526 V1055 H514 L512 1053 Z" fill="#f5c33b"/><rect x="504" y="1051" width="9" height="4" fill="#e0a020"/><path d="M508 1068 V1063 H522 V1068 H518 V1065 H512 V1068 Z" fill="#2e9fd8"/>
<circle cx="564" cy="1060" r="11" fill="#db4437"/><path d="M564 1060 L574.500 1056 A11 11 0 0 1 558 1069 Z" fill="#f4b400"/><path d="M564 1060 L558 1069.500 A11 11 0 0 1 553.500 1057 Z" fill="#0f9d58"/><circle cx="564" cy="1060" r="5.500" fill="#fff"/><circle cx="564" cy="1060" r="4.200" fill="#4285f4"/>
<ellipse cx="609" cy="1057" rx="8.500" ry="7" fill="#35c85a"/><path d="M604 1062 L603 1066 L608 1063 Z" fill="#35c85a"/><ellipse cx="618" cy="1063" rx="7.500" ry="6" fill="#f0f0f0"/><path d="M621 1067 L623 1070 L618 1068 Z" fill="#f0f0f0"/>
<path d="M650 1065 L659 1050 H670 L672 1069 L664 1070 Z" fill="#c4dce6" stroke="#6a8a9a"/><path d="M650 1065 L659 1050 L664 1070 Z" fill="#5a90aa"/>
<rect x="699" y="1048" width="24" height="24" fill="#72bf3c" stroke="#c8e0b0"/><text class="c" x="712" y="1068" style="font-size:21px;font-weight:bold;fill:#fff">V</text>
<path d="M748 1054 L760 1048 L772 1052 V1065 L760 1071 L748 1067 Z" fill="#d62020"/><text x="750" y="1066" style="font-size:12px;font-weight:bold;fill:#fff" textLength="21">SW</text>
<rect x="785" y="1040" width="48" height="40" fill="#4a4a4a"/>
<path d="M797 1054 L809 1048 L821 1052 V1065 L809 1071 L797 1067 Z" fill="#c82024"/><text x="799" y="1065" style="font-size:11.500px;font-weight:bold;fill:#fff" textLength="20">SW</text><text x="804" y="1071" style="font-size:7.500px;font-weight:bold;fill:#fff" textLength="17">2016</text>
<g fill="#76b9ed"><rect x="593" y="1078" width="31" height="2"/><rect x="625" y="1078" width="8" height="2" fill="#4f88b4"/><rect x="642" y="1078" width="40" height="2"/><rect x="691" y="1078" width="40" height="2"/><rect x="740" y="1078" width="40" height="2"/><rect x="785" y="1078" width="48" height="2"/></g>

<!-- tray -->
<path d="M1647 1063 L1652 1058 L1657 1063" fill="none" stroke="#fff" stroke-width="1.300"/>
<circle cx="1675" cy="1060" r="7.500" fill="#f09a4a"/><rect x="1671" y="1058" width="8" height="5" fill="#fff"/>
<path d="M1696 1054 H1709 V1064 H1696 Z M1699 1067 H1706 M1702 1064 V1067" fill="none" stroke="#fff" stroke-width="1.100"/><rect x="1693" y="1053" width="4" height="4" fill="#1a1a1a" stroke="#fff"/>
<path d="M1719 1057 H1722 L1726 1053 V1067 L1722 1063 H1719 Z" fill="none" stroke="#fff"/><path d="M1729 1057 Q1731 1060 1729 1063 M1732 1055 Q1735 1060 1732 1065" fill="none" stroke="#fff"/>
<text class="c w" x="1749" y="1065" style="font-size:14px;fill:#fff">中</text>
<g transform="rotate(-12 1776 1060)"><rect x="1769" y="1053" width="14" height="14" rx="2" fill="#ee4a1c"/><text class="c" x="1776" y="1065" style="font-size:14px;font-weight:bold;fill:#fff">S</text></g>
<text class="c" x="1831" y="1056" style="font-size:12.500px;fill:#fff">11:04</text>
<text class="c" x="1831" y="1074" style="font-size:12.500px;fill:#fff">2021/5/16</text>
<path d="M1880 1053 H1895 V1065 H1890 L1887 1069 V1065 H1880 Z" fill="#fff"/><path d="M1883 1056 H1892 M1883 1059 H1892 M1883 1062 H1892" stroke="#1a1a1a"/>
</svg>
</body></html>
